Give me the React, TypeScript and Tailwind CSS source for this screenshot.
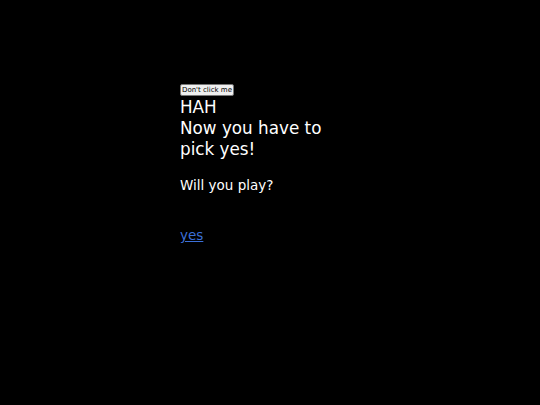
export default function App() {
  return (
    <div className="min-h-[405px] bg-black flex justify-center font-['DejaVu_Sans',sans-serif] text-white">
      <div className="w-[180px] pt-[84px]">
        <button className="block h-[12px] px-[1px] bg-[#efefef] border border-[#767676] rounded-[2px] text-[7px] leading-[10px] text-black">
          Don&apos;t click me
        </button>
        <p className="mt-[1px] text-[16.8px] leading-[21px]">HAH</p>
        <p className="text-[16.8px] leading-[21px]">Now you have to pick yes!</p>
        <p className="mt-[17px] text-[13.5px] leading-[16px]">Will you play?</p>
        <a href="#" className="block mt-[34px] text-[13.5px] leading-[16px] text-[#3b6fd8] underline">
          yes
        </a>
      </div>
    </div>
  );
}
